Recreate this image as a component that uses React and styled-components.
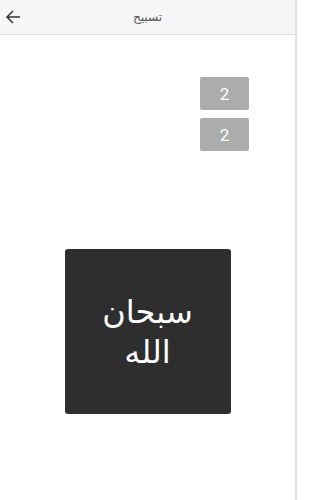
import React, { useState } from 'react'
import styled, { createGlobalStyle } from 'styled-components'

const GlobalStyle = createGlobalStyle`
    html, body {
        margin: 0;
        padding: 0;
        background: #fff;
        font-family: "DejaVu Sans", sans-serif;
    }
`

const Page = styled.div`
    width: 297px;
    height: 500px;
    border-right: 2px solid #e2e2e2;
    box-sizing: border-box;
    display: flex;
    flex-direction: column;
`

const Topbar = styled.header`
    height: 34px;
    background-color: #f6f6f6;
    border-bottom: 1px solid #dcdcdc;
    display: flex;
    align-items: center;
    position: relative;
    flex-shrink: 0;
`

const BackButton = styled.button`
    border: none;
    background: none;
    padding: 0 0 0 5px;
    height: 100%;
    display: flex;
    align-items: center;
    cursor: pointer;
`

const Title = styled.div`
    position: absolute;
    left: 0;
    right: 0;
    text-align: center;
    font-size: 12px;
    color: #555;
    pointer-events: none;
`

const Counters = styled.div`
    display: flex;
    flex-direction: column;
    align-items: flex-end;
    gap: 8px;
    padding: 42px 46px 0 0;
`

const Counter = styled.div`
    width: 49px;
    height: 33px;
    background-color: #acacac;
    border-radius: 2px;
    color: #fff;
    font-family: Roboto, "DejaVu Sans", sans-serif;
    font-size: 17px;
    display: flex;
    align-items: center;
    justify-content: center;
`

const Stage = styled.div`
    display: flex;
    justify-content: center;
    padding: 98px 0 0 0;
`

const ZikrButton = styled.button`
    width: 166px;
    height: 165px;
    background-color: #2e2e2e;
    border: none;
    border-radius: 3px;
    color: #fff;
    font-family: "DejaVu Sans", sans-serif;
    font-size: 32px;
    line-height: 40px;
    direction: rtl;
    cursor: pointer;
    padding: 0 30px;
`

export default function App() {
    const [count, setCount] = useState(2)
    return (
        <>
            <GlobalStyle />
            <Page>
                <Topbar>
                    <BackButton aria-label='back'>
                        <svg width='16' height='16' viewBox='0 0 16 16' fill='none' stroke='#333' strokeWidth='1.5'>
                            <path d='M15 8H2M8 2L2 8l6 6' />
                        </svg>
                    </BackButton>
                    <Title dir='rtl'>تسبيح</Title>
                </Topbar>
                <Counters>
                    <Counter>{count}</Counter>
                    <Counter>2</Counter>
                </Counters>
                <Stage>
                    <ZikrButton onClick={() => setCount(count + 1)}>سبحان الله</ZikrButton>
                </Stage>
            </Page>
        </>
    )
}
